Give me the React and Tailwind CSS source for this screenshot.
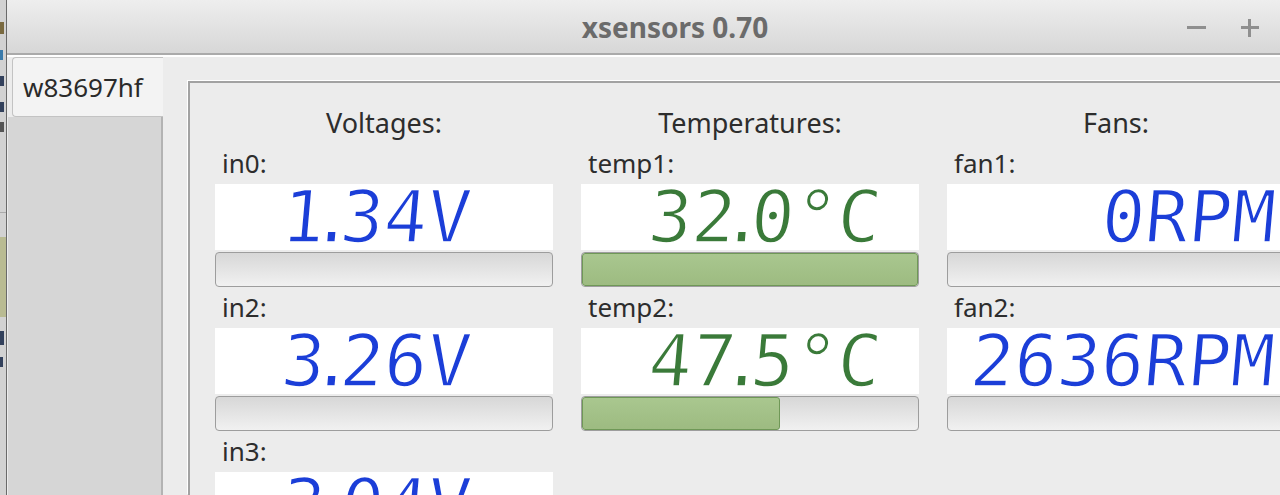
import React from 'react';

const voltages = [
  { label: 'in0:', value: '1.34V' },
  { label: 'in2:', value: '3.26V' },
  { label: 'in3:', value: '3.04V' },
];

const temperatures = [
  { label: 'temp1:', value: '32.0°C', fill: 100 },
  { label: 'temp2:', value: '47.5°C', fill: 59 },
];

const fans = [
  { label: 'fan1:', value: '0RPM' },
  { label: 'fan2:', value: '2636RPM' },
];

// LCD readout, the dot only takes a narrow cell like the real display
function Lcd({ text, color, pad }) {
  return (
    <div className={`h-[66px] bg-white flex justify-end items-center ${pad}`}>
      <div
        className={`skew-x-[-5deg] whitespace-pre font-['DejaVu_Sans_Mono',monospace] text-[72px] leading-[66px] [-webkit-text-stroke:1.5px_white] ${color}`}
      >
        {text.split('').map((ch, i) =>
          ch === '.' ? (
            <span key={i} className="-mx-[14px]">.</span>
          ) : (
            <span key={i}>{ch}</span>
          )
        )}
      </div>
    </div>
  );
}

function Bar({ fill = 0 }) {
  return (
    <div className="mt-[2px] h-[35px] rounded-[4px] border border-[#9d9d9d] bg-gradient-to-b from-[#d7d7d7] to-[#f1f1f1] overflow-hidden flex">
      {fill > 0 && (
        <div
          className="h-full rounded-[3px] border border-[#6f9857] bg-gradient-to-b from-[#a9c78f] to-[#9dbb81]"
          style={{ width: `${fill}%` }}
        />
      )}
    </div>
  );
}

function Column({ title, rows, color, pad }) {
  return (
    <div className="w-[338px] shrink-0">
      <div className="h-[41px] leading-[41px] text-center text-[27px] text-[#2d2d2d]">{title}</div>
      {rows.map((row) => (
        <div key={row.label}>
          <div className="h-[41px] leading-[41px] pl-[7px] text-[26px] text-[#2d2d2d]">{row.label}</div>
          <Lcd text={row.value} color={color} pad={pad} />
          <Bar fill={row.fill} />
        </div>
      ))}
    </div>
  );
}

// sliver of the window behind, only a few pixels of it show
function OtherWindow() {
  return (
    <div className="w-[6px] shrink-0 bg-[#d2d2d2] flex flex-col overflow-hidden">
      <div className="mt-[22px] w-[4px] h-[12px] bg-[#7a6a40]" />
      <div className="mt-[16px] w-[3px] h-[10px] bg-[#3a7aaa]" />
      <div className="mt-[16px] w-[4px] h-[10px] bg-[#33415c]" />
      <div className="mt-[16px] w-[4px] h-[10px] bg-[#33415c]" />
      <div className="mt-[10px] w-[4px] h-[10px] bg-[#555555]" />
      <div className="mt-[80px] h-px bg-[#aaaaaa]" />
      <div className="mt-[24px] h-[80px] bg-[#b9bb92]" />
      <div className="mt-[14px] w-[4px] h-[14px] bg-[#33415c]" />
      <div className="mt-[12px] w-[3px] h-[10px] bg-[#33415c]" />
    </div>
  );
}

export default function App() {
  return (
    <div className="w-[1280px] h-[495px] overflow-hidden flex bg-[#d2d2d2] font-['Noto_Sans',sans-serif]">
      <OtherWindow />
      <div className="w-px shrink-0 bg-[#6a6a6a]" />

      <div className="w-[1336px] shrink-0 flex flex-col bg-[#ececec]">
        {/* title bar */}
        <div className="h-[55px] shrink-0 grid grid-cols-[1fr_auto_1fr] items-center bg-gradient-to-b from-[#eeeeee] to-[#d7d7d7] border-b-2 border-[#aaaaaa]">
          <div />
          <div className="text-[28px] font-bold text-[#6b6b6b] leading-[55px]">xsensors 0.70</div>
          <div className="flex justify-end pr-[14px]">
            <div className="w-[53px] h-[53px] flex items-center justify-center">
              <div className="w-[19px] h-[3px] bg-[#8f8f8f]" />
            </div>
            <div className="w-[53px] h-[53px] flex items-center justify-center">
              <div className="relative w-[18px] h-[18px]">
                <div className="absolute left-0 top-[7.5px] w-[18px] h-[3px] bg-[#8f8f8f]" />
                <div className="absolute top-0 left-[7.5px] w-[3px] h-[18px] bg-[#8f8f8f]" />
              </div>
            </div>
            <div className="w-[53px] h-[53px]" />
          </div>
        </div>
        <div className="h-[2px] shrink-0 bg-white" />

        {/* notebook */}
        <div className="flex flex-1 min-h-0">
          <div className="w-[156px] shrink-0 flex flex-col">
            <div className="ml-[5px] h-[60px] border-t border-l border-b border-[#c3c3c3] rounded-l-[4px] bg-[#f3f3f3] pl-[10px] text-[26px] leading-[58px] text-[#2a2a2a]">
              w83697hf
            </div>
            <div className="flex-1 ml-px bg-[#d6d6d6] border-r-2 border-[#b3b3b3]" />
          </div>

          <div className="flex-1 ml-[25px] mt-[24px] border-t-2 border-l-2 border-[#a2a2a2] shadow-[-1px_-1px_0_#ffffff] pl-[25px] pt-[19px]">
            <div className="flex gap-[28px]">
              <Column title="Voltages:" rows={voltages} color="text-[#1b3ed8]" pad="pr-[82px]" />
              <Column title="Temperatures:" rows={temperatures} color="text-[#3a7a39]" pad="pr-[38px]" />
              <Column title="Fans:" rows={fans} color="text-[#1b3ed8]" pad="pr-[10px]" />
            </div>
          </div>
        </div>
      </div>
    </div>
  );
}
